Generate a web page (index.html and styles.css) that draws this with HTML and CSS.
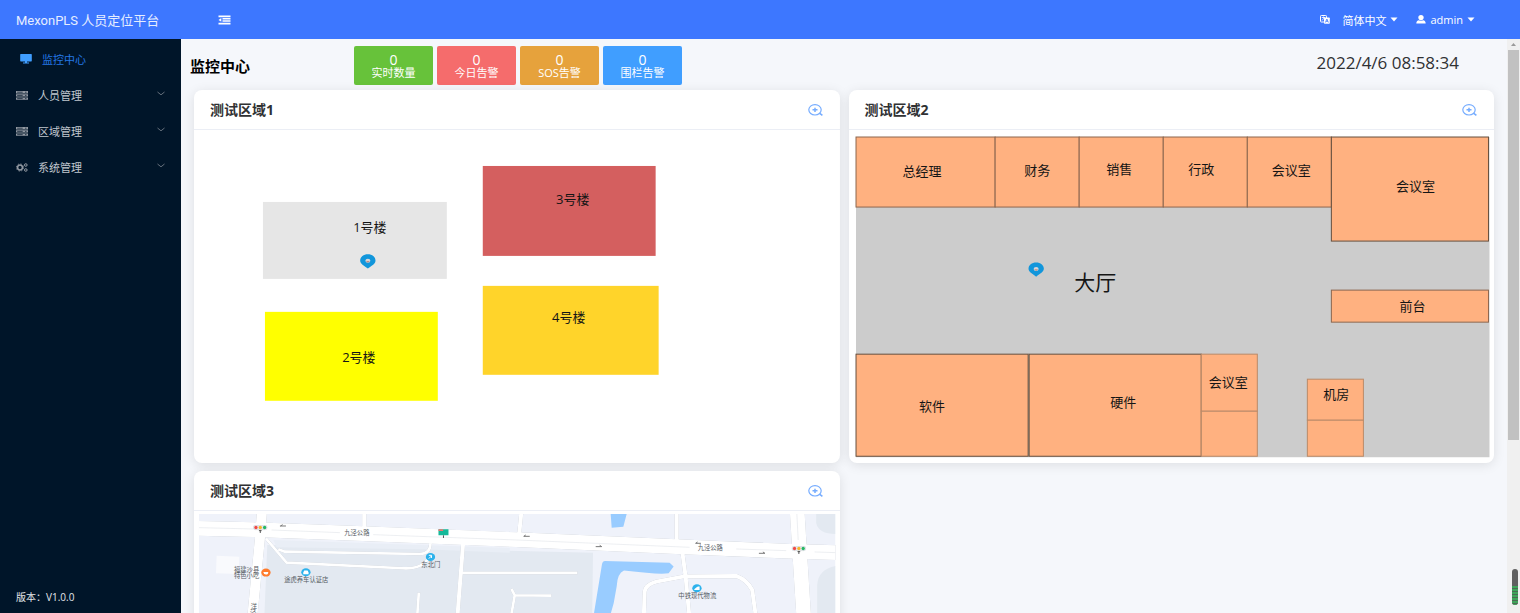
FILE: index.html
```html
<!DOCTYPE html>
<html lang="zh-CN">
<head>
<meta charset="utf-8">
<title>MexonPLS 人员定位平台</title>
<link rel="stylesheet" href="styles.css">
</head>
<body>
<svg class="defs" aria-hidden="true">
  <defs>
    <symbol id="server" viewBox="0 0 12 9">
      <path fill="currentColor" d="M0 0h12v2.4H0zM0 3.2h12v2.4H0zM0 6.4h12v2.4H0z"/>
      <path stroke="#001529" stroke-width=".7" d="M1.2 1.2h5.500M1.200 4.400h5.500M1.200 7.600h5.500M9 1.200h1.500M9 4.400h1.500M9 7.600h1.500"/>
    </symbol>
    <symbol id="chevron" viewBox="0 0 8 5"><path fill="none" stroke="currentColor" d="M.5 1L4 3.800 7.500 1"/></symbol>
    <symbol id="caret" viewBox="0 0 8 5"><path fill="currentColor" d="M.5.5h7L4 4.500z"/></symbol>
    <symbol id="zoomin" viewBox="0 0 15 12">
      <ellipse cx="7" cy="5.800" rx="6.200" ry="5.200" fill="none" stroke="currentColor" stroke-width="1.200"/>
      <path fill="none" stroke="currentColor" stroke-width="1.500" d="M4.500 5.800h5M7 3.700v4.200M11.800 9.300l2.600 2.100"/>
    </symbol>
    <symbol id="pin" viewBox="0 0 16 15">
      <path fill="#1296db" d="M8 .3C3.700.3.300 3 .300 6.500.300 9.800 4 11.600 8 14.700 12 11.600 15.700 9.800 15.700 6.500 15.700 3 12.300.3 8 .3z"/>
      <ellipse cx="8" cy="6.800" rx="2.500" ry="2" fill="#d9d5d8"/>
      <path fill="#b98c86" d="M6 7.200h4l-2 1.600z"/>
    </symbol>
    <symbol id="lights" viewBox="0 0 44 26">
      <rect x="1" y="1" width="42" height="13" rx="6" fill="#e8ebf0" stroke="#b9bec6"/>
      <circle cx="9" cy="7.500" r="5" fill="#f04b46"/><circle cx="22" cy="7.500" r="5" fill="#f7b52c"/><circle cx="35" cy="7.500" r="5" fill="#27b765"/>
      <path stroke="#555" stroke-width="3" d="M22 15v9M18 17h8"/>
    </symbol>
  </defs>
</svg>

<header class="topbar">
  <div class="brand">MexonPLS 人员定位平台</div>
  <button class="plain fold" type="button" aria-label="折叠菜单">
    <svg width="13" height="10" viewBox="0 0 13 10"><path fill="currentColor" d="M.5.500h12v1.700H.5zM4.500 3h8v1.500h-8zM4.500 5.300h8v1.500h-8zM.5 7.700h12v1.700H.5zM.5 4.900L3.300 3v3.800z"/></svg>
  </button>
  <div class="tools">
    <button class="plain" type="button">
      <svg class="lang" width="10" height="9" viewBox="0 0 10 9"><rect x=".5" y=".5" width="6" height="6.500" rx=".8" fill="none" stroke="currentColor"/><path fill="none" stroke="currentColor" stroke-width=".8" d="M1.800 2.500h3.400M3.500 1.500v1M2 5.500l2.500-3"/><rect x="4" y="2.500" width="5.800" height="6.300" rx=".8" fill="currentColor"/><path fill="none" stroke="#3d77ff" stroke-width=".8" d="M5.400 7.500L6.900 4l1.500 3.500M6 6.300h1.900"/></svg>
      简体中文
      <svg width="8" height="5"><use href="#caret"/></svg>
    </button>
    <button class="plain" type="button">
      <svg width="10" height="9" viewBox="0 0 10 9"><path fill="currentColor" d="M5 0c1.700 0 2.700 1 2.700 2.500S6.700 5.200 5 5.200 2.300 4 2.300 2.500 3.300 0 5 0zM.3 8.500C.3 6.500 1.300 5.400 3 5.200c1.200.8 2.800.8 4 0 1.700.2 2.700 1.300 2.700 3.300z"/></svg>
      admin
      <svg width="8" height="5"><use href="#caret"/></svg>
    </button>
  </div>
</header>

<div class="shell">
  <aside class="sidebar">
    <nav class="menu">
      <a class="item active" href="#monitor">
        <svg width="12" height="10" viewBox="0 0 12 10"><path fill="currentColor" d="M.8 0h10.400q.6 0 .6.600v6.200q0 .6-.6.600H7v1.100h2v1H3v-1h2V7.400H.8q-.6 0-.6-.6V.6Q.2 0 .8 0z"/></svg>
        <span>监控中心</span>
      </a>
      <a class="item" href="#people"><svg width="12" height="9"><use href="#server"/></svg><span>人员管理</span><svg class="arrow" width="8" height="5"><use href="#chevron"/></svg></a>
      <a class="item" href="#areas"><svg width="12" height="9"><use href="#server"/></svg><span>区域管理</span><svg class="arrow" width="8" height="5"><use href="#chevron"/></svg></a>
      <a class="item" href="#system">
        <svg width="12" height="9" viewBox="0 0 12 9"><g fill="none" stroke="currentColor"><circle cx="4" cy="4.500" r="2.500" stroke-width="1.700"/><circle cx="4" cy="4.500" r="3.600" stroke-width=".8" stroke-dasharray="1.400 1.430"/><circle cx="9.800" cy="2" r="1.300"/><circle cx="9.800" cy="7" r="1.300"/></g></svg>
        <span>系统管理</span><svg class="arrow" width="8" height="5"><use href="#chevron"/></svg>
      </a>
    </nav>
    <div class="version">版本：V1.0.0</div>
  </aside>

  <main class="content">
    <div class="toolbar">
      <h1>监控中心</h1>
      <div class="stats">
        <div class="stat green"><b>0</b><span>实时数量</span></div>
        <div class="stat red"><b>0</b><span>今日告警</span></div>
        <div class="stat orange"><b>0</b><span>SOS告警</span></div>
        <div class="stat blue"><b>0</b><span>围栏告警</span></div>
      </div>
      <time class="clock">2022/4/6 08:58:34</time>
    </div>

    <div class="cards">
      <section class="card">
        <div class="card-head"><h2>测试区域1</h2><button class="plain zoom" type="button" aria-label="放大"><svg width="15" height="12"><use href="#zoomin"/></svg></button></div>
        <svg class="plan" viewBox="194 130 646 333">
          <rect x="263" y="202" width="184" height="77" fill="#e6e6e6"/>
          <rect x="265" y="312" width="173" height="89" fill="#ff0"/>
          <rect x="483" y="166" width="173" height="90" fill="#d45f5f"/>
          <rect x="483" y="286" width="176" height="89" fill="#ffd42a"/>
          <g class="room-name">
            <text x="370" y="232">1号楼</text><text x="359" y="362">2号楼</text><text x="573" y="204">3号楼</text><text x="569" y="322">4号楼</text>
          </g>
          <use href="#pin" x="360" y="254" width="16" height="15"/>
        </svg>
      </section>

      <section class="card">
        <div class="card-head"><h2>测试区域2</h2><button class="plain zoom" type="button" aria-label="放大"><svg width="15" height="12"><use href="#zoomin"/></svg></button></div>
        <svg class="plan" viewBox="849 130 645 333">
          <rect x="856" y="137" width="633" height="320" fill="#ccc"/>
          <g class="room">
            <rect x="856" y="137" width="139" height="70"/><rect x="995" y="137" width="84" height="70"/><rect x="1079" y="137" width="84" height="70"/><rect x="1163" y="137" width="84" height="70"/><rect x="1247" y="137" width="84" height="70"/>
            <rect class="dark" x="1331" y="137" width="157" height="104"/>
            <rect x="1331" y="290" width="157" height="32"/>
            <rect class="dark" x="856" y="354" width="172" height="102"/><rect class="dark" x="1029" y="354" width="172" height="102"/>
            <rect class="pale" x="1201" y="354" width="56" height="57"/><rect class="pale" x="1201" y="411" width="56" height="45"/>
            <rect class="pale" x="1307" y="379" width="56" height="41"/><rect class="pale" x="1307" y="420" width="56" height="36"/>
          </g>
          <g class="room-name">
            <text x="922" y="176">总经理</text><text x="1037" y="175">财务</text><text x="1119" y="174">销售</text><text x="1201" y="174">行政</text><text x="1291" y="175">会议室</text><text x="1415" y="191">会议室</text><text x="1412" y="311">前台</text><text x="932" y="411">软件</text><text x="1123" y="407">硬件</text><text x="1228" y="387">会议室</text><text x="1336" y="399">机房</text>
            <text class="hall" x="1095" y="290">大厅</text>
          </g>
          <use href="#pin" x="1028" y="262" width="16" height="15"/>
        </svg>
      </section>

      <section class="card">
        <div class="card-head"><h2>测试区域3</h2><button class="plain zoom" type="button" aria-label="放大"><svg width="15" height="12"><use href="#zoomin"/></svg></button></div>
        <svg class="plan" viewBox="12 153 1938 900">
          <defs>
            <clipPath id="mapclip"><path d="M27 162H1938V1041H27z"/></clipPath>
            <g id="roads" fill="none" stroke-linejoin="round">
              <path class="w44" d="M20 205L190 209 500 220 980 239 1460 260 1800 274 1945 278"/>
              <path class="w30" d="M216 155L210 235 188 460 140 1050"/>
              <path class="w44" d="M1823 155L1830 270 1842 460 1870 1050"/>
              <path class="w12" d="M523 155V215M995 155L987 235M1461 155V250"/>
              <path class="w8" d="M228 235L290 308 640 325Q685 327 705 308L722 290M265 268L285 275 690 282Q722 282 722 250M815 339H1163M687 398L680 500M965 387L975 406 1085 407M975 406L955 520"/>
              <path class="w12" d="M820 250L804 456 780 1050M1478 275L1488 350 1498 456 1520 700M1355 700L1365 395Q1367 375 1400 365L1480 350 1640 348Q1672 360 1688 390L1697 456V700"/>
            </g>
          </defs>
          <g clip-path="url(#mapclip)">
            <path fill="#eff2fa" d="M27 162H1938V1041H27z"/>
            <path fill="#e3e9f1" d="M232 255L1210 278 1200 1041H200zM1880 162V190Q1888 222 1938 222V162zM1938 318Q1886 328 1883 375V520H1938z"/>
            <path fill="#e9eef6" d="M250 240L960 264V278L700 268 260 262z"/>
            <path fill="#f9fafd" d="M80 287L148 290 146 342 78 340z"/>
            <path fill="#9cf" d="M1263 162H1311L1301 200 1266 203zM1246 303L1440 308 1452 320 1437 340Q1410 345 1303 332 1283 340 1281 380L1272 430 1255 490H1208L1237 312Q1239 303 1246 303z"/>
            <use class="casing" href="#roads"/>
            <use class="surface" href="#roads"/>
            <path class="lane" d="M27 203L190 207M245 210L450 218M550 224L980 240 1500 262M1640 267L1790 272M1875 276L1938 278M1822 162L1826 240"/>
            <path class="direction" d="M270 198h18M272 198l6-4M1002 229h18M1002 229l6-4M1218 260h18M1236 260l-6-4M1518 250h16M1518 250l6-4M1708 280h18M1726 280l-6-4"/>
            <use href="#lights" x="189" y="195" width="44" height="26"/>
            <use href="#lights" x="1806" y="258" width="44" height="26"/>
            <path fill="#15b99a" d="M746 208h30v18h-30z"/><path fill="#ef7770" d="M746 208h14v5h-14z"/><path stroke="#555" stroke-width="3" d="M761 226v8"/>
            <ellipse cx="228" cy="338" rx="14" ry="12" fill="#ff7b2c"/><path fill="#fff" d="M220 336h15q0 8-7 8t-8-8z"/>
            <g fill="#2cb2ec"><ellipse cx="348" cy="337" rx="14" ry="12"/><ellipse cx="722" cy="291" rx="14" ry="12"/><ellipse cx="1522" cy="385" rx="14" ry="12"/></g>
            <path fill="#fff" d="M340 338l3-6h10l3 6v5h-16zM1514 388l6-5 5-3h5v10h-16z"/><path fill="none" stroke="#fff" stroke-width="3" d="M717 286h8v8M717 296l8-8"/>
            <g class="place">
              <text x="501" y="226">九泾公路</text><text x="1562" y="270">九泾公路</text>
              <text x="170" y="336">福建沙县</text><text x="170" y="354">特色小吃</text>
              <text x="349" y="367">途虎养车认证店</text><text x="723" y="321">东北门</text><text x="1523" y="415">中铁现代物流</text>
              <text x="192" y="446">洋</text><text x="190" y="466">泾</text>
            </g>
          </g>
        </svg>
      </section>
    </div>
  </main>

  <div class="scrollbar" aria-hidden="true">
    <svg width="13" height="11" viewBox="0 0 13 11"><path fill="#9a9a9a" d="M4 7l2.500-3L9 7z"/></svg>
    <div class="thumb"></div>
    <div class="meter"><div class="meter-level"></div></div>
  </div>
</div>
</body>
</html>
```
FILE: styles.css
```css
* { box-sizing: border-box; }

body {
  margin: 0;
  height: 100vh;
  display: flex;
  flex-direction: column;
  overflow: hidden;
  background: #f5f7fb;
  color: #303133;
  font-family: "Open Sans", "Noto Sans CJK SC", sans-serif;
  font-size: 11px;
}

h1, h2 { margin: 0; }
svg { flex: none; }
.defs { position: absolute; width: 0; height: 0; }

.plain {
  display: flex;
  align-items: center;
  padding: 0;
  border: 0;
  background: none;
  color: inherit;
  font: inherit;
  cursor: pointer;
}

.topbar {
  flex: none;
  display: flex;
  align-items: center;
  height: 39px;
  background: #3d77ff;
  color: #fff;
}
.brand {
  width: 218px;
  padding-left: 16px;
  font-size: 13px;
  font-family: Roboto, "Noto Sans CJK SC", sans-serif;
  color: #e6eeff;
}
.tools { display: flex; gap: 18px; margin-left: auto; padding-right: 45px; }
.tools .plain { gap: 4px; }
.lang { margin-right: 8px; }

.shell { flex: 1; min-height: 0; display: flex; }

.sidebar {
  flex: none;
  display: flex;
  flex-direction: column;
  justify-content: space-between;
  width: 181px;
  padding: 2px 0 6px;
  background: #001529;
  color: #c0c7ce;
}
.item {
  display: flex;
  align-items: center;
  gap: 10px;
  height: 36px;
  padding: 0 16px;
  color: inherit;
  text-decoration: none;
}
.item.active { padding-left: 20px; color: #409eff; }
.item.active span { color: #2478e5; }
.item > svg { color: #9299a2; }
.item.active > svg { color: #409eff; }
.item .arrow { margin-left: auto; margin-bottom: 4px; color: #64707c; }
.version { padding-left: 16px; font-size: 10px; line-height: 20px; color: #e3e6e9; }

.content { flex: 1; min-width: 0; overflow: hidden; }

.toolbar { display: flex; align-items: center; height: 51px; padding: 2px 48px 0 9px; }
.toolbar h1 { width: 164px; font-size: 15px; color: #000; }
.stats { display: flex; gap: 4px; }
.stat {
  display: flex;
  flex-direction: column;
  align-items: center;
  justify-content: center;
  width: 79px;
  height: 39px;
  border-radius: 2px;
  color: #fff;
}
.stat b { font: 14px/15px "Open Sans", sans-serif; }
.stat span { padding-bottom: 2px; line-height: 11px; }
.green { background: #67c23a; }
.red { background: #f56c6c; }
.orange { background: #e6a23c; }
.blue { background: #409eff; }
.clock { margin-left: auto; padding-bottom: 6px; font-size: 17px; }

.cards { display: grid; grid-template-columns: 1fr 1fr; gap: 8px 9px; padding: 0 13px 8px; }
.card {
  min-width: 0;
  border-radius: 8px;
  background: #fff;
  box-shadow: 0 2px 12px rgba(0, 0, 0, 0.1);
}
.card-head {
  display: flex;
  align-items: center;
  justify-content: space-between;
  height: 40px;
  padding: 0 17px 0 16px;
  border-bottom: 1px solid #ebeef5;
}
.card-head h2 { font-size: 14px; line-height: 18px; }
.zoom { color: #75acff; }

.plan { display: block; width: 100%; height: auto; }
.room rect { fill: #ffb180; stroke: #8c674f; }
.room .dark { stroke: #66503f; }
.room .pale { stroke: #ba8a68; }
.room-name { font-size: 13px; fill: #151515; text-anchor: middle; }
.room-name .hall { font-size: 21px; }

.w44 { stroke-width: 44px; }
.w30 { stroke-width: 30px; }
.w12 { stroke-width: 12px; }
.w8 { stroke-width: 8px; }
.casing { stroke: #cfd4dc; filter: drop-shadow(0 0 2px #c4c9d2); }
.surface { stroke: #fff; }
.lane { fill: none; stroke: #e4e7ec; stroke-width: 2px; }
.direction { fill: none; stroke: #777; stroke-width: 3px; }
.place { font-size: 19px; fill: #555b63; text-anchor: middle; }

.scrollbar {
  flex: none;
  position: relative;
  display: flex;
  flex-direction: column;
  align-items: center;
  width: 13px;
  background: #f0f0f0;
}
.thumb { width: 11px; height: 68%; background: #c1c1c1; }
.meter {
  position: absolute;
  right: 2px;
  bottom: 8px;
  display: flex;
  align-items: flex-end;
  width: 6px;
  height: 36px;
  border-radius: 3px;
  overflow: hidden;
  background: #606060;
}
.meter-level {
  width: 100%;
  height: 54%;
  background: repeating-linear-gradient(#3fa45a 0 2px, #4a6b52 2px 3px);
}
```
